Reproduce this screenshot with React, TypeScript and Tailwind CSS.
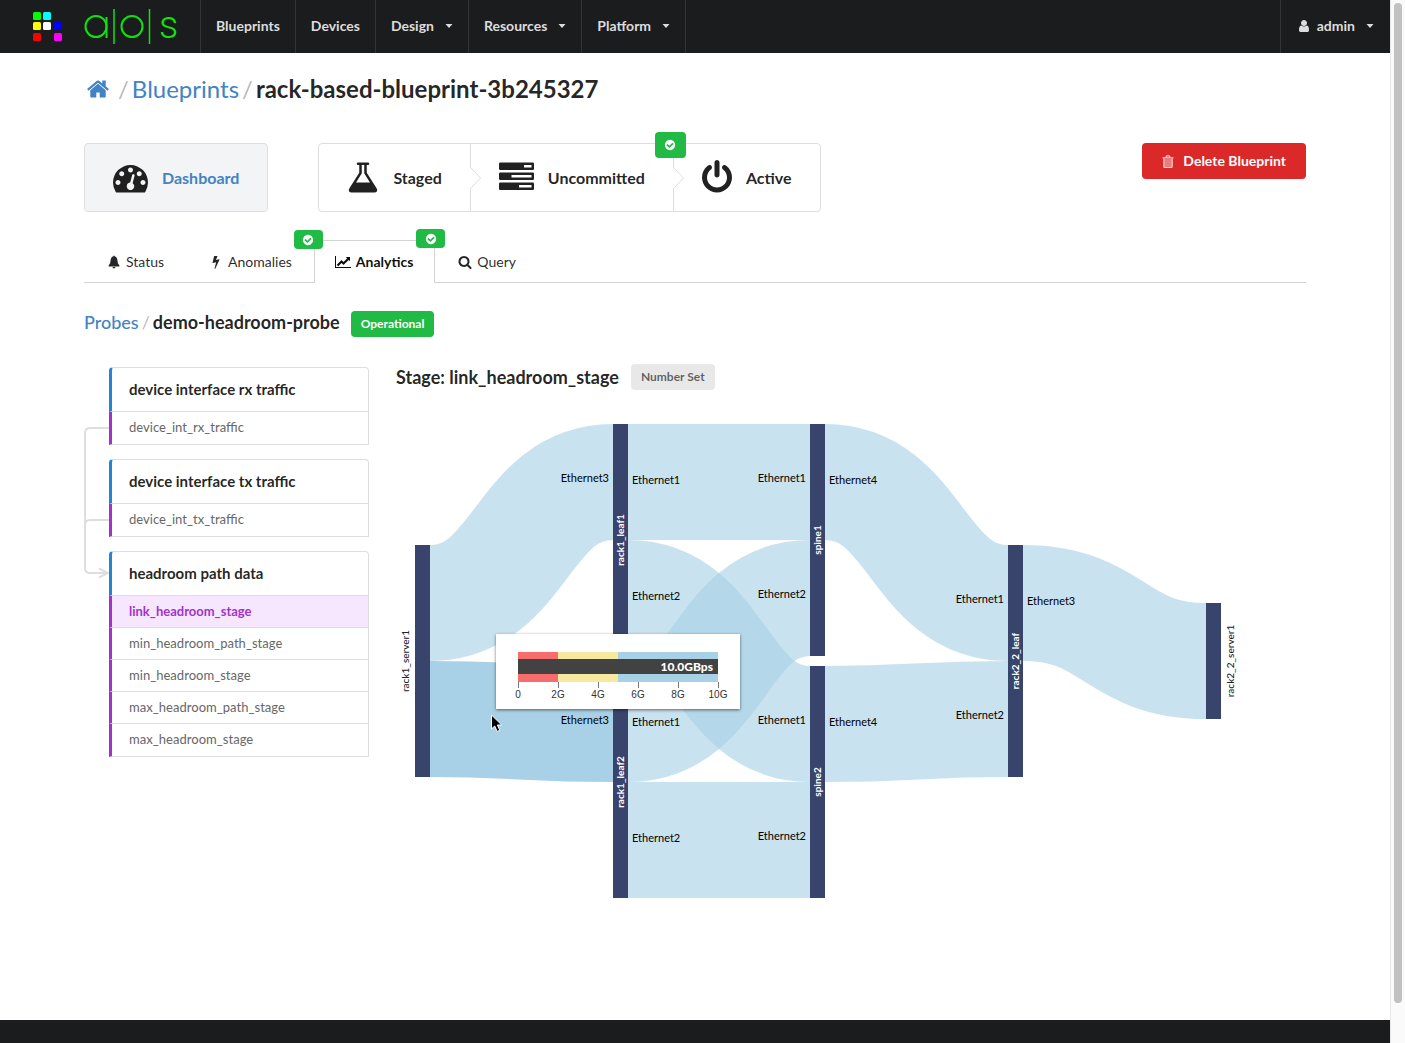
import { Fragment } from "react";
import type { ReactNode } from "react";

const ICONS = {
  home: "M1472 992v480q0 26-19 45t-45 19h-384v-384h-256v384h-384q-26 0-45-19t-19-45v-480q0-1 .5-3t.5-3l575-474 575 474q1 2 1 6zm223-69l-62 74q-8 9-21 11h-3q-13 0-21-7l-692-577-692 577q-12 8-24 7-13-2-21-11l-62-74q-8-10-7-23.5t11-21.5l719-599q32-26 76-26t76 26l244 204v-195q0-14 9-23t23-9h192q14 0 23 9t9 23v408l219 182q10 8 11 21.5t-7 23.5z",
  user: "M1536 1399q0 109-62.5 187t-150.5 78h-854q-88 0-150.5-78t-62.5-187q0-85 8.5-160.5t31.5-152 58.5-131 94-89 134.5-34.5q131 128 313 128t313-128q76 0 134.5 34.5t94 89 58.5 131 31.5 152 8.5 160.5zm-256-887q0 159-112.5 271.5t-271.5 112.5-271.5-112.5-112.5-271.5 112.5-271.5 271.5-112.5 271.5 112.5 112.5 271.5z",
  dashboard:
    "M384 1152q0-53-37.5-90.5t-90.5-37.5-90.5 37.5-37.5 90.5 37.5 90.5 90.5 37.5 90.5-37.5 37.5-90.5zm192-448q0-53-37.5-90.5t-90.5-37.5-90.5 37.5-37.5 90.5 37.5 90.5 90.5 37.5 90.5-37.5 37.5-90.5zm428 481l101-382q6-26-7.5-48.5t-38.5-29.5-48 6.5-30 39.5l-101 382q-60 5-107 43.5t-63 98.5q-20 77 20 146t117 89 146-20 89-117q16-60-6-117t-72-91zm660-33q0-53-37.5-90.5t-90.5-37.5-90.5 37.5-37.5 90.5 37.5 90.5 90.5 37.5 90.5-37.5 37.5-90.5zm-640-640q0-53-37.5-90.5t-90.5-37.5-90.5 37.5-37.5 90.5 37.5 90.5 90.5 37.5 90.5-37.5 37.5-90.5zm448 192q0-53-37.5-90.5t-90.5-37.5-90.5 37.5-37.5 90.5 37.5 90.5 90.5 37.5 90.5-37.5 37.5-90.5zm320 448q0 261-141 483-19 29-54 29h-1402q-35 0-54-29-141-221-141-483 0-182 71-348t191-286 286-191 348-71 348 71 286 191 191 286 71 348z",
  flask: "M1591 1448q56 89 21.5 152.5t-140.5 63.5h-1152q-106 0-140.5-63.5t21.5-152.5l503-793v-399h-64q-26 0-45-19t-19-45 19-45 45-19h512q26 0 45 19t19 45-19 45-45 19h-64v399zm-779-725l-272 429h712l-272-429-20-31v-436h-128v436z",
  server:
    "M64 128h1664q64 0 64 64v256q0 64-64 64h-1664q-64 0-64-64v-256q0-64 64-64zM1280 256v128h384v-128zM64 640h1664q64 0 64 64v256q0 64-64 64h-1664q-64 0-64-64v-256q0-64 64-64zM640 768v128h1024v-128zM64 1152h1664q64 0 64 64v256q0 64-64 64h-1664q-64 0-64-64v-256q0-64 64-64zM1024 1280v128h640v-128z",
  power:
    "M1664 896q0 156-61 298t-164 245-245 164-298 61-298-61-245-164-164-245-61-298q0-182 80.5-343t226.5-270q43-32 95.5-25t83.5 50q32 42 24.5 94.5t-49.5 84.5q-98 74-151.5 181t-53.5 228q0 104 40.5 198.5t109.5 163.5 163.5 109.5 198.500 40.5 198.5-40.5 163.5-109.5 109.5-163.5 40.5-198.5q0-121-53.5-228t-151.5-181q-42-32-49.5-84.5t24.5-94.5q31-43 84-50t95 25q146 109 226.5 270t80.5 343zm-640-768v640q0 52-38 90t-90 38-90-38-38-90v-640q0-52 38-90t90-38 90 38 38 90z",
  check:
    "M1412 734q0-28-18-46l-91-90q-19-19-45-19t-45 19l-408 407-226-226q-19-19-45-19t-45 19l-91 90q-18 18-18 46 0 27 18 45l362 362q19 19 45 19 27 0 46-19l543-543q18-18 18-45zm252 162q0 209-103 385.5t-279.5 279.5-385.5 103-385.5-103-279.5-279.5-103-385.5 103-385.5 279.5-279.5 385.5-103 385.5 103 279.5 279.5 103 385.5z",
  search:
    "M1216 832q0-185-131.5-316.5t-316.5-131.5-316.5 131.5-131.5 316.5 131.5 316.5 316.5 131.5 316.5-131.5 131.5-316.5zm512 832q0 52-38 90t-90 38q-54 0-90-38l-343-342q-179 124-399 124-143 0-273.5-55.5t-225-150-150-225-55.5-273.5 55.5-273.5 150-225 225-150 273.5-55.5 273.5 55.5 225 150 150 225 55.5 273.5q0 220-124 399l343 343q37 37 37 90z",
  bolt: "M1333 566q18 20 7 44l-540 1157q-13 25-42 25-4 0-14-2-17-5-25.5-19t-4.5-30l197-808-406 101q-4 1-12 1-18 0-31-11-18-15-13-39l201-825q4-14 16-23t28-9h328q19 0 32 12.5t13 29.5q0 8-5 18l-171 463 396-98q8-2 12-2 19 0 34 15z",
  bell: "M896 64q70 0 70 80v30q170 36 268 170t98 324q0 470 246 660q60 50 40 94t-86 46h-1272q-66-2-86-46t40-94q246-190 246-660q0-190 98-324t268-170v-30q0-80 70-80zM704 1536h384q-10 82-66 137t-126 55-126-55-66-137z",
};

type IconName = keyof typeof ICONS;

function Icon({ name, className, viewBox = "0 0 1792 1792" }: { name: IconName; className: string; viewBox?: string }) {
  return (
    <svg viewBox={viewBox} fill="currentColor" fillRule={name === "server" ? "evenodd" : "nonzero"} aria-hidden="true" className={"shrink-0 " + className}>
      <path d={ICONS[name]} />
    </svg>
  );
}

function LineChartIcon() {
  return (
    <svg viewBox="0 0 2048 1792" fill="currentColor" aria-hidden="true" className="h-[14px] w-4 shrink-0">
      <path d="M2048 1536v128h-2048v-1536h128v1408h1920zm-128-1248v435q0 21-19.5 29.5t-35.5-7.5l-121-121-633 633q-10 10-23 10t-23-10l-233-233-416 416-192-192 585-585q10-10 23-10t23 10l233 233 464-464-121-121q-16-16-7.5-35.5t29.5-19.5h435q14 0 23 9t9 23z" />
    </svg>
  );
}

function TrashIcon() {
  return (
    <svg viewBox="0 0 12 13" aria-hidden="true" className="h-[13px] w-3 shrink-0 opacity-80">
      <path d="M2 3.5h8V12H2z" fill="#fff" fillOpacity="0.5" />
      <path d="M0.5 2.8h11M4 2.5l0.6-1.6h2.8L8 2.5M1.8 3v8.5q0 1 1 1h6.4q1 0 1-1V3" fill="none" stroke="#fff" strokeWidth="1.1" />
    </svg>
  );
}

function Caret({ className }: { className: string }) {
  return (
    <svg viewBox="0 0 8 4" fill="currentColor" aria-hidden="true" className={"h-1 w-2 " + className}>
      <path d="M0.5 0h7L4 4z" />
    </svg>
  );
}

function Logo() {
  const tiles = [
    [0, 0, "#00ff00"],
    [10, 0, "#00ffff"],
    [0, 10, "#ffff00"],
    [10, 10, "#ffffff"],
    [21, 10, "#0000ff"],
    [0, 21, "#ff0000"],
    [21, 21, "#ff00ff"],
  ] as const;
  return (
    <a href="#" aria-label="AOS" className="flex w-[200px] items-center pl-[33px]">
      <svg viewBox="0 0 29 29" aria-hidden="true" className="size-[29px]">
        {tiles.map(([x, y, fill]) => (
          <rect key={fill} x={x} y={y} width="8" height="8" rx="1.5" fill={fill} />
        ))}
      </svg>
      <svg viewBox="0 0 94 36" aria-hidden="true" className="ml-[22px] h-9 w-[94px] overflow-visible" fill="none" stroke="#0ce40c" strokeWidth="2">
        <circle cx="12" cy="17.5" r="10.5" />
        <line x1="22.5" y1="8" x2="22.5" y2="29" />
        <line x1="30" y1="0" x2="30" y2="35" strokeWidth="1.5" />
        <circle cx="48" cy="17.5" r="10.5" />
        <line x1="65.5" y1="0" x2="65.5" y2="35" strokeWidth="1.5" />
        <text x="75" y="29" fill="#0ce40c" stroke="none" fontSize="38" fontWeight="300" fontFamily="Roboto, sans-serif">
          s
        </text>
      </svg>
    </a>
  );
}

function NavItem({ label, menu }: { label: string; menu?: boolean }) {
  const style = "flex items-center border-r border-[#323435] px-[15px] pb-0.5 hover:bg-white/5";
  return menu ? (
    <button type="button" className={style}>
      {label}
      <Caret className="ml-[11px]" />
    </button>
  ) : (
    <a href="#" className={style}>
      {label}
    </a>
  );
}

function Header() {
  return (
    <header className="flex h-[53px] bg-[#1b1c1d] text-sm font-bold text-[#dddddd]">
      <Logo />
      <nav className="flex flex-1 border-l border-[#323435]">
        <NavItem label="Blueprints" />
        <NavItem label="Devices" />
        <NavItem label="Design" menu />
        <NavItem label="Resources" menu />
        <NavItem label="Platform" menu />
      </nav>
      <button type="button" className="flex items-center border-l border-[#323435] px-4 pb-0.5 hover:bg-white/5">
        <Icon name="user" className="mr-1.5 size-[14px]" />
        admin
        <Caret className="ml-[11px]" />
      </button>
    </header>
  );
}

function OkBadge({ className }: { className: string }) {
  return (
    <span className={"absolute z-10 flex items-center justify-center rounded bg-[#21ba45] text-white " + className}>
      <Icon name="check" className="size-3" />
    </span>
  );
}

function Step({ icon, label, arrow, badge }: { icon: ReactNode; label: string; arrow?: boolean; badge?: boolean }) {
  return (
    <a href="#" className={"relative flex items-center gap-[14px] px-7 " + (arrow ? "border-r border-[#dededf]" : "")}>
      {icon}
      {label}
      {arrow && (
        <svg viewBox="0 0 12 22" aria-hidden="true" className="absolute top-1/2 -right-3 z-10 h-[22px] w-3 -translate-y-1/2">
          <path d="M0 0L10.5 11L0 22z" fill="#fff" />
          <path d="M0.5 0.5L10.5 11L0.5 21.5" fill="none" stroke="#dededf" />
        </svg>
      )}
      {badge && <OkBadge className="-top-3 -right-[13px] h-[26px] w-[31px]" />}
    </a>
  );
}

function Tab({ icon, label, active, badge }: { icon: ReactNode; label: string; active?: boolean; badge?: string }) {
  return (
    <a
      href="#"
      aria-current={active ? "page" : undefined}
      className={
        "relative flex h-[43px] items-center gap-1 border border-b-0 pr-[21px] pl-5 " +
        (active ? "border-[#d4d4d5] bg-white font-bold text-black/95" : "border-transparent text-black/85")
      }
    >
      <span className="flex w-[17px] justify-center">{icon}</span>
      {label}
      {badge && <OkBadge className={badge} />}
    </a>
  );
}

const PROBES = [
  { name: "device interface rx traffic", stages: ["device_int_rx_traffic"] },
  { name: "device interface tx traffic", stages: ["device_int_tx_traffic"] },
  {
    name: "headroom path data",
    stages: ["link_headroom_stage", "min_headroom_path_stage", "min_headroom_stage", "max_headroom_path_stage", "max_headroom_stage"],
  },
];

function ProbeList() {
  return (
    <aside className="flex w-[285px] shrink-0 pt-1">
      <svg viewBox="0 0 25 220" fill="none" stroke="#dededf" strokeWidth="2" aria-hidden="true" className="h-[220px] w-[25px] shrink-0">
        <path d="M25 61H6Q1 61 1 66V201Q1 206 6 206H24" />
        <path d="M25 153H6Q1 153 1 158" />
        <path d="M15 201.5L24 206L15 210.5" />
      </svg>
      <div className="flex flex-1 flex-col gap-[14px]">
        {PROBES.map((probe) => (
          <section key={probe.name}>
            <h3 className="flex h-11 items-center rounded-t border-t border-r border-l-[3px] border-[#dededf] border-l-[#2185d0] pl-[17px] text-[15px] font-bold text-black/87">
              {probe.name}
            </h3>
            <ul>
              {probe.stages.map((stage) => (
                <li key={stage} className="h-8 border-t border-r border-l-[3px] border-[#dededf] border-l-[#a333c8] last:h-[34px] last:border-b">
                  <a
                    href="#"
                    className={
                      "flex h-[31px] items-center pl-[17px] text-[13px] " +
                      (stage === "link_headroom_stage" ? "bg-[#f6e7ff] font-bold text-[#a333c8]" : "font-medium text-black/60")
                    }
                  >
                    {stage}
                  </a>
                </li>
              ))}
            </ul>
          </section>
        ))}
      </div>
    </aside>
  );
}

const NODE_WIDTH = 15;
const LINK_WIDTH = 116;

const NODES = [
  { name: "rack1_server1", x: 19, y: 135, h: 232, side: "left" },
  { name: "rack1_leaf1", x: 217, y: 14, h: 232 },
  { name: "rack1_leaf2", x: 217, y: 256, h: 232 },
  { name: "spine1", x: 414, y: 14, h: 232 },
  { name: "spine2", x: 414, y: 256, h: 232 },
  { name: "rack2_2_leaf", x: 612, y: 135, h: 232 },
  { name: "rack2_2_server1", x: 810, y: 193, h: 116, side: "right" },
];

const LINKS = [
  { x0: 34, y0: 193, x1: 217, y1: 72, to: "Ethernet3" },
  { x0: 34, y0: 309, x1: 217, y1: 314, to: "Ethernet3", hovered: true },
  { x0: 232, y0: 72, x1: 414, y1: 72, from: "Ethernet1", to: "Ethernet1" },
  { x0: 232, y0: 188, x1: 414, y1: 314, from: "Ethernet2", to: "Ethernet1" },
  { x0: 232, y0: 314, x1: 414, y1: 188, from: "Ethernet1", to: "Ethernet2" },
  { x0: 232, y0: 430, x1: 414, y1: 430, from: "Ethernet2", to: "Ethernet2" },
  { x0: 429, y0: 72, x1: 612, y1: 193, from: "Ethernet4", to: "Ethernet1" },
  { x0: 429, y0: 314, x1: 612, y1: 309, from: "Ethernet4", to: "Ethernet2" },
  { x0: 627, y0: 193, x1: 810, y1: 251, from: "Ethernet3" },
];

function Sankey() {
  return (
    <svg viewBox="0 0 910 500" role="img" aria-label="Link headroom between devices" className="w-full" fontFamily="Lato, sans-serif" fontSize="11">
      {LINKS.map(({ x0, y0, x1, y1, hovered }) => {
        const mid = (x0 + x1) / 2;
        return (
          <path
            key={`${x0}-${y0}`}
            d={`M${x0},${y0}C${mid},${y0} ${mid},${y1} ${x1},${y1}`}
            fill="none"
            stroke="#a8d0e6"
            strokeWidth={LINK_WIDTH}
            strokeOpacity={hovered ? 1 : 0.62}
          />
        );
      })}
      {NODES.map(({ name, x, y, h, side }) => {
        const labelX = side === "left" ? x - 6 : side === "right" ? x + 28 : x + 11;
        const labelY = y + h / 2;
        return (
          <Fragment key={name}>
            <rect x={x} y={y} width={NODE_WIDTH} height={h} fill="#39446c" />
            <text x={labelX} y={labelY} transform={`rotate(-90 ${labelX} ${labelY})`} textAnchor="middle" fill={side ? "#222" : "#fff"} fontSize="10" fontWeight={side ? 500 : 700}>
              {name}
            </text>
          </Fragment>
        );
      })}
      {LINKS.map(({ x0, y0, x1, y1, from, to }) => (
        <Fragment key={`${x0}-${y0}`}>
          {from && (
            <text x={x0 + 4} y={y0 + 2}>
              {from}
            </text>
          )}
          {to && (
            <text x={x1 - 4} y={y1} textAnchor="end">
              {to}
            </text>
          )}
        </Fragment>
      ))}
    </svg>
  );
}

function Tooltip() {
  return (
    <div role="tooltip" className="absolute top-56 left-[100px] h-[75px] w-[244px] bg-white shadow-[0_1px_3px_rgba(0,0,0,0.55)]">
      <svg viewBox="0 0 244 75" role="img" aria-label="Headroom 10.0GBps" className="h-[75px] w-[244px]">
        <rect x="22" y="18" width="40" height="30" fill="#f76c6c" />
        <rect x="62" y="18" width="60" height="30" fill="#f8e9a1" />
        <rect x="122" y="18" width="100" height="30" fill="#a8d0e6" />
        <rect x="22" y="25" width="200" height="15" fill="#424242" />
        <text x="217" y="37" textAnchor="end" fill="#fff" fontFamily="Lato, sans-serif" fontSize="12" fontWeight="900">
          10.0GBps
        </text>
        {["0", "2G", "4G", "6G", "8G", "10G"].map((tick, i) => (
          <Fragment key={tick}>
            <rect x={22 + i * 40} y="48" width="1" height="6" fill="#777" />
            <text x={22 + i * 40} y="64" textAnchor="middle" fill="#333" fontFamily="'Liberation Sans', sans-serif" fontSize="10">
              {tick}
            </text>
          </Fragment>
        ))}
      </svg>
    </div>
  );
}

function Pointer() {
  return (
    <svg viewBox="0 0 14 20" aria-hidden="true" className="absolute top-[304px] left-[94px] h-5 w-[14px]">
      <path d="M1.5 1v14l3.2-3 2.5 5.5 2.6-1.2-2.5-5.3h4.4z" fill="#000" stroke="#fff" strokeWidth="1" />
    </svg>
  );
}

export default function App() {
  return (
    <div className="flex min-h-screen bg-white font-['Lato',sans-serif] text-sm text-black/87">
      <div className="flex min-w-0 flex-1 flex-col">
        <Header />
        <main className="flex-1 px-[84px]">
          <h1 className="mt-5 flex h-8 items-center gap-[3px] text-2xl font-bold">
            <a href="#" aria-label="Home" className="mr-[5px] ml-0.5 text-[#4183c4]">
              <Icon name="home" className="size-6" />
            </a>
            <span className="font-normal text-black/30">/</span>
            <a href="#" className="font-normal text-[#4183c4]">
              Blueprints
            </a>
            <span className="font-normal text-black/30">/</span>
            <span>rack-based-blueprint-3b245327</span>
          </h1>

          <div className="mt-[38px] flex items-start">
            <a href="#" className="flex h-[69px] items-center gap-[14px] rounded border border-[#dededf] bg-[#f3f4f5] px-7 text-base font-bold">
              <Icon name="dashboard" className="size-[35px]" />
              <span className="text-[#4183c4]">Dashboard</span>
            </a>
            <nav aria-label="Blueprint stages" className="ml-[50px] flex h-[69px] rounded border border-[#dededf] text-base font-bold">
              <Step icon={<Icon name="flask" viewBox="77 0 1638 1792" className="h-[35px] w-8" />} label="Staged" arrow />
              <Step icon={<Icon name="server" className="size-[35px]" />} label="Uncommitted" arrow badge />
              <Step icon={<Icon name="power" viewBox="128 0 1536 1792" className="h-[35px] w-[30px]" />} label="Active" />
            </nav>
            <button type="button" className="ml-auto flex h-9 items-center gap-[9px] rounded bg-[#db2828] px-5 font-bold text-white">
              <TrashIcon />
              Delete Blueprint
            </button>
          </div>

          <nav aria-label="Blueprint sections" className="mt-7 flex border-b border-[#d4d4d5]">
            <div className="-mb-px flex">
              <Tab icon={<Icon name="bell" className="size-[14px]" />} label="Status" />
              <Tab icon={<Icon name="bolt" className="size-[14px]" />} label="Anomalies" badge="-top-[11px] -right-[10px] h-[19px] w-[29px]" />
              <Tab icon={<LineChartIcon />} label="Analytics" active badge="-top-3 -right-[11px] h-[19px] w-[29px]" />
              <Tab icon={<Icon name="search" className="size-[14px]" />} label="Query" />
            </div>
          </nav>

          <div className="mt-7 flex h-[26px] items-center gap-[11px]">
            <h2 className="flex items-center gap-[3px] pb-1 text-lg font-bold">
              <a href="#" className="font-medium text-[#4183c4]">
                Probes
              </a>
              <span className="font-normal text-black/30">/</span>
              <span>demo-headroom-probe</span>
            </h2>
            <span className="flex h-[26px] items-center rounded bg-[#21ba45] px-[10px] text-xs font-bold text-white">Operational</span>
          </div>

          <div className="mt-[26px] flex gap-[27px]">
            <ProbeList />
            <section className="min-w-0 flex-1 pt-px">
              <div className="flex h-[26px] items-center gap-3">
                <h2 className="text-lg font-bold">Stage: link_headroom_stage</h2>
                <span className="flex h-[26px] items-center rounded bg-[#e8e8e8] px-[10px] text-xs font-bold text-black/60">Number Set</span>
              </div>
              <div className="relative mt-5">
                <Sankey />
                <Tooltip />
                <Pointer />
              </div>
            </section>
          </div>
        </main>
        <footer className="h-[23px] bg-[#1b1c1d]" />
      </div>
      <div aria-hidden="true" className="flex w-[15px] shrink-0 justify-center border-l border-[#e8e8e8] bg-[#fafafa] pt-[3px] pb-10">
        <div className="w-2 rounded-full bg-[#c1c1c1]" />
      </div>
    </div>
  );
}
